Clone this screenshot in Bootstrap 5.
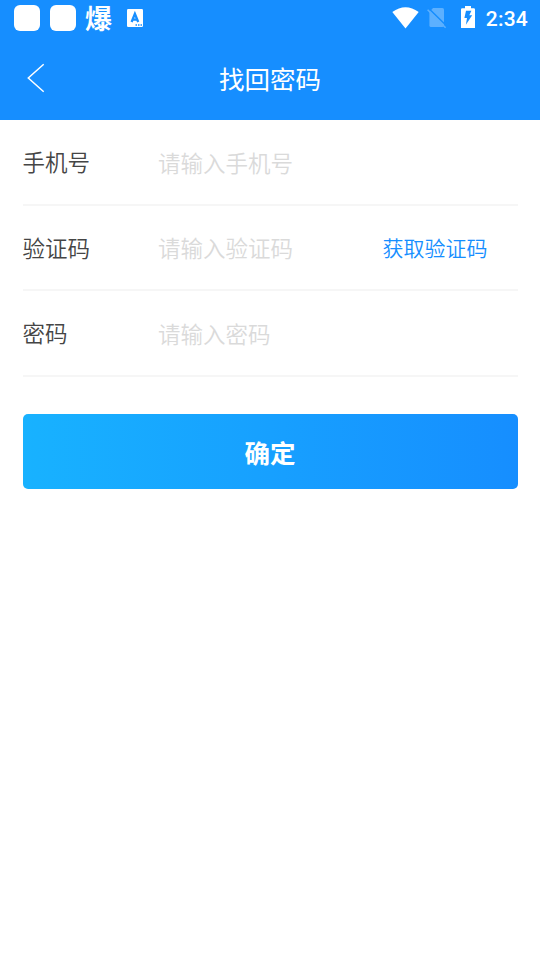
<!DOCTYPE html>
<html lang="zh-CN">
<head>
<meta charset="utf-8">
<meta name="viewport" content="width=device-width, initial-scale=1">
<title>找回密码</title>
<link rel="stylesheet" href="https://cdn.jsdelivr.net/npm/bootstrap@5.3.0/dist/css/bootstrap.min.css">
<style>
body{font-family:"Noto Sans CJK SC",sans-serif;background:#fff;color:#454545}
.top-area{background:#168eff;height:120px}
.status-line{height:36px;padding:0 12px 0 14px}
.app-tile{width:26px;height:26px;border-radius:6px;background:#fff}
.tile-gap{margin-right:10px}
.notice-glyph{font-size:27px;font-weight:700;line-height:40px;width:28px;margin:-1px 14px 0 9px}
.sim{margin-left:8.5px}
.battery{margin-left:13.5px;margin-top:-2px}
.clock{font:500 21px/36px Roboto,sans-serif;letter-spacing:.2px;margin-left:11px;padding-top:2px}
.title-line{height:84px;padding-left:27px}
.title-text{font-size:25.5px;line-height:36px}
.title-end{width:45px}
.form-area{padding:0 22.5px}
.field-row{height:85.5px;padding-bottom:1px;border-bottom:2px solid #f6f6f6;font-size:22.5px;font-weight:350}
.field-name{width:135.5px;line-height:34px}
.field-input,.field-input:focus{font-size:22.5px;font-weight:350;line-height:34px;background:transparent;box-shadow:none;outline:0;color:#454545;min-width:0;margin-top:1px}
.field-input::placeholder{color:#dadada;opacity:1}
.code-link{font-size:21px;color:#168eff;margin-right:30px;line-height:32px}
.confirm-btn{height:75px;margin-top:37.5px;border-radius:5px;background:linear-gradient(90deg,#18b2ff,#168eff);font-size:25.5px;font-weight:700;padding:2px 0 0}
</style>
</head>
<body>
<header class="top-area text-white">
  <div class="status-line d-flex align-items-center">
    <span class="app-tile tile-gap flex-shrink-0"></span>
    <span class="app-tile flex-shrink-0"></span>
    <span class="notice-glyph">爆</span>
    <svg width="16" height="18" viewBox="0 0 16 18"><rect width="16" height="18" rx="1.2" fill="#fff"/><path d="M4.6 13 7.9 4.8 11.2 13M5.6 10.6h4.6" fill="none" stroke="#168eff" stroke-width="2.3"/><path d="M8.5 15.2h1.5v1.5H8.5zM11 15.2h1.5v1.5H11zM13.5 15.2H15v1.5h-1.5z" fill="#168eff"/></svg>
    <svg class="ms-auto" width="27" height="22" viewBox="0 0 27 22"><path d="M0.3 5Q13.5-4.6 26.7 5L13.5 21.4Z" fill="#fff"/></svg>
    <svg class="sim" width="20" height="21" viewBox="0 0 20 21"><path d="M6 0h9.4q1.6 0 1.6 1.6V17.5q0 1.6-1.6 1.6H4q-1.6 0-1.6-1.6V4Z" fill="#5cb0ff"/><path d="M1.5 .3 20 18.3" stroke="#168eff" stroke-width="1.6"/><path d="M.6 1.8 18.6 19.8" stroke="#5cb0ff" stroke-width="1.6"/></svg>
    <svg class="battery" width="14" height="22" viewBox="0 0 14 22"><path d="M1.3 2.2H4V0h6v2.2h2.7Q14 2.2 14 3.5V22H0V3.5Q0 2.2 1.3 2.2Z" fill="#fff"/><path d="M5 4.7h5.4L8.3 9.3h2.9L4.9 18.7 6 12H3.4Z" fill="#168eff"/></svg>
    <span class="clock">2:34</span>
  </div>
  <div class="title-line d-flex align-items-center">
    <svg width="18" height="30" viewBox="0 0 18 30"><path d="M16.7 1.3 1.3 15 16.7 28.7" fill="none" stroke="#fff" stroke-width="1.5"/></svg>
    <div class="title-text flex-grow-1 text-center">找回密码</div>
    <span class="title-end"></span>
  </div>
</header>
<main class="form-area">
  <div class="field-row d-flex align-items-center">
    <label class="field-name flex-shrink-0" for="phone">手机号</label>
    <input class="field-input border-0 p-0 flex-grow-1" id="phone" placeholder="请输入手机号">
  </div>
  <div class="field-row d-flex align-items-center">
    <label class="field-name flex-shrink-0" for="code">验证码</label>
    <input class="field-input border-0 p-0 flex-grow-1" id="code" placeholder="请输入验证码">
    <a class="code-link text-decoration-none flex-shrink-0" href="#">获取验证码</a>
  </div>
  <div class="field-row d-flex align-items-center">
    <label class="field-name flex-shrink-0" for="pass">密码</label>
    <input class="field-input border-0 p-0 flex-grow-1" id="pass" type="password" placeholder="请输入密码">
  </div>
  <button class="confirm-btn btn w-100 border-0 text-white" type="button">确定</button>
</main>
<script src="https://cdn.jsdelivr.net/npm/bootstrap@5.3.0/dist/js/bootstrap.bundle.min.js"></script>
</body>
</html>
